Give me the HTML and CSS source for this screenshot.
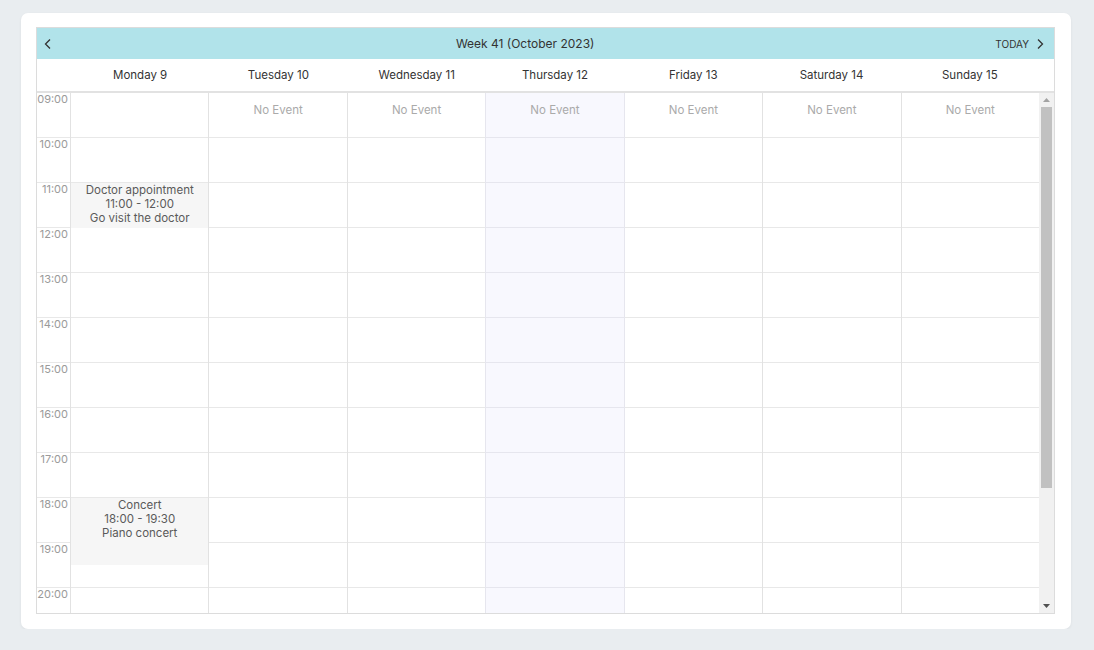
FILE: index.html
```html
<!DOCTYPE html>
<html>
<head>
<meta charset="utf-8">
<link rel="stylesheet" href="styles.css">
</head>
<body>
<div class="card">
  <div class="cal">
    <div class="toolbar">
      <button class="nav prev" aria-label="Previous"><svg width="10" height="12" viewBox="0 0 10 12"><path d="M7 1.5 L2.5 6 L7 10.5" fill="none" stroke="#333" stroke-width="1.3"/></svg></button>
      <div class="title">Week 41 (October 2023)</div>
      <button class="today">TODAY</button>
      <button class="nav next" aria-label="Next"><svg width="10" height="12" viewBox="0 0 10 12"><path d="M3 1.5 L7.5 6 L3 10.5" fill="none" stroke="#333" stroke-width="1.3"/></svg></button>
    </div>
    <div class="dayhead">
      <div class="corner"></div>
      <div class="dh">Monday 9</div>
      <div class="dh">Tuesday 10</div>
      <div class="dh">Wednesday 11</div>
      <div class="dh">Thursday 12</div>
      <div class="dh">Friday 13</div>
      <div class="dh">Saturday 14</div>
      <div class="dh">Sunday 15</div>
      <div class="sbspace"></div>
    </div>
    <div class="bodywrap">
      <div class="body">
        <div class="grid">
          <div class="times">
            <div class="slot"><span>09:00</span></div>
            <div class="slot"><span>10:00</span></div>
            <div class="slot"><span>11:00</span></div>
            <div class="slot"><span>12:00</span></div>
            <div class="slot"><span>13:00</span></div>
            <div class="slot"><span>14:00</span></div>
            <div class="slot"><span>15:00</span></div>
            <div class="slot"><span>16:00</span></div>
            <div class="slot"><span>17:00</span></div>
            <div class="slot"><span>18:00</span></div>
            <div class="slot"><span>19:00</span></div>
            <div class="slot"><span>20:00</span></div>
            <div class="slot"><span>21:00</span></div>
            <div class="slot"><span>22:00</span></div>
            <div class="slot"><span>23:00</span></div>
          </div>
          <div class="day">
            <div class="ev" style="top:90px;height:45px">Doctor appointment<br>11:00 - 12:00<br>Go visit the doctor</div>
            <div class="ev" style="top:405px;height:67px">Concert<br>18:00 - 19:30<br>Piano concert</div>
          </div>
          <div class="day"><div class="none">No Event</div></div>
          <div class="day"><div class="none">No Event</div></div>
          <div class="day today-col"><div class="none">No Event</div></div>
          <div class="day"><div class="none">No Event</div></div>
          <div class="day"><div class="none">No Event</div></div>
          <div class="day last"><div class="none">No Event</div></div>
        </div>
      </div>
      <div class="sb">
        <div class="sb-btn"><svg width="7" height="4" viewBox="0 0 7 4"><path d="M0 4 L3.5 0 L7 4 Z" fill="#a3a3a3"/></svg></div>
        <div class="sb-track"><div class="sb-thumb"></div></div>
        <div class="sb-btn"><svg width="7" height="4" viewBox="0 0 7 4"><path d="M0 0 L7 0 L3.5 4 Z" fill="#505050"/></svg></div>
      </div>
    </div>
  </div>
</div>
</body>
</html>
```
FILE: styles.css
```css
* { box-sizing: border-box; }
html, body { margin: 0; padding: 0; }
body {
  background: #e9edf0;
  font-family: Inter, "Noto Sans", sans-serif;
  padding: 13px 23px 0 21px;
}
.card {
  width: 1050px;
  height: 616px;
  background: #fff;
  border-radius: 7px;
  box-shadow: 0 1px 3px rgba(0,0,0,0.06);
  padding: 14px 16px 15px 15px;
}
.cal {
  border: 1px solid #dcdcdc;
  height: 587px;
  display: flex;
  flex-direction: column;
}
.toolbar {
  height: 31px;
  background: #b1e3ea;
  display: flex;
  align-items: center;
  color: #333;
}
.toolbar button {
  border: 0;
  background: none;
  font-family: inherit;
  color: #333;
  cursor: pointer;
  padding: 0;
}
.nav { width: 22px; height: 31px; display: flex; align-items: center; justify-content: center; }
.next { margin-right: 3px; }
.title { flex: 1; text-align: center; font-size: 12px; padding-right: 4px; }
.today { font-size: 10px; margin-right: 0; }
.dayhead {
  display: flex;
  height: 34px;
  border-bottom: 2px solid #e2e2e2;
}
.corner { width: 34px; }
.dh {
  flex: 1;
  text-align: center;
  font-size: 11.5px;
  color: #333;
  padding-top: 9px;
}
.sbspace { width: 15px; }
.bodywrap {
  flex: 1;
  display: flex;
  min-height: 0;
}
.body {
  flex: 1;
  overflow-y: scroll;
  overflow-x: hidden;
  scrollbar-width: none;
}
.body::-webkit-scrollbar { display: none; }
.grid { display: flex; }
.times, .day {
  background-image: linear-gradient(to bottom, transparent 44px, #e8e8e8 44px, #e8e8e8 45px);
  background-size: 100% 45px;
}
.times { width: 34px; border-right: 1px solid #e2e2e2; }
.slot { height: 45px; text-align: right; padding-right: 2px; font-size: 11px; color: #9a9a9a; line-height: 12px; }
.day {
  flex: 1;
  position: relative;
  border-right: 1px solid #e2e2e2;
  height: 675px;
}
.day.last { border-right: 0; }
.today-col {
  background-color: #f8f8fe;
  background-image: linear-gradient(to bottom, transparent 44px, #e6e6ee 44px, #e6e6ee 45px);
  border-left: 1px solid #e6e6ee;
  border-right-color: #e6e6ee;
  margin-left: -1px;
}
.none {
  text-align: center;
  font-size: 11.5px;
  color: #aaa;
  padding-top: 10px;
}
.ev {
  position: absolute;
  left: 0;
  right: 0;
  background: #f6f6f6;
  text-align: center;
  font-size: 11.5px;
  line-height: 14px;
  color: #5a5a5a;
}
.sb {
  width: 15px;
  background: #f1f1f1;
  display: flex;
  flex-direction: column;
}
.sb-btn {
  height: 14px;
  display: flex;
  align-items: center;
  justify-content: center;
}
.sb-track { flex: 1; padding: 0 2px; }
.sb-thumb {
  height: 381px;
  background: #c1c1c1;
}
```
